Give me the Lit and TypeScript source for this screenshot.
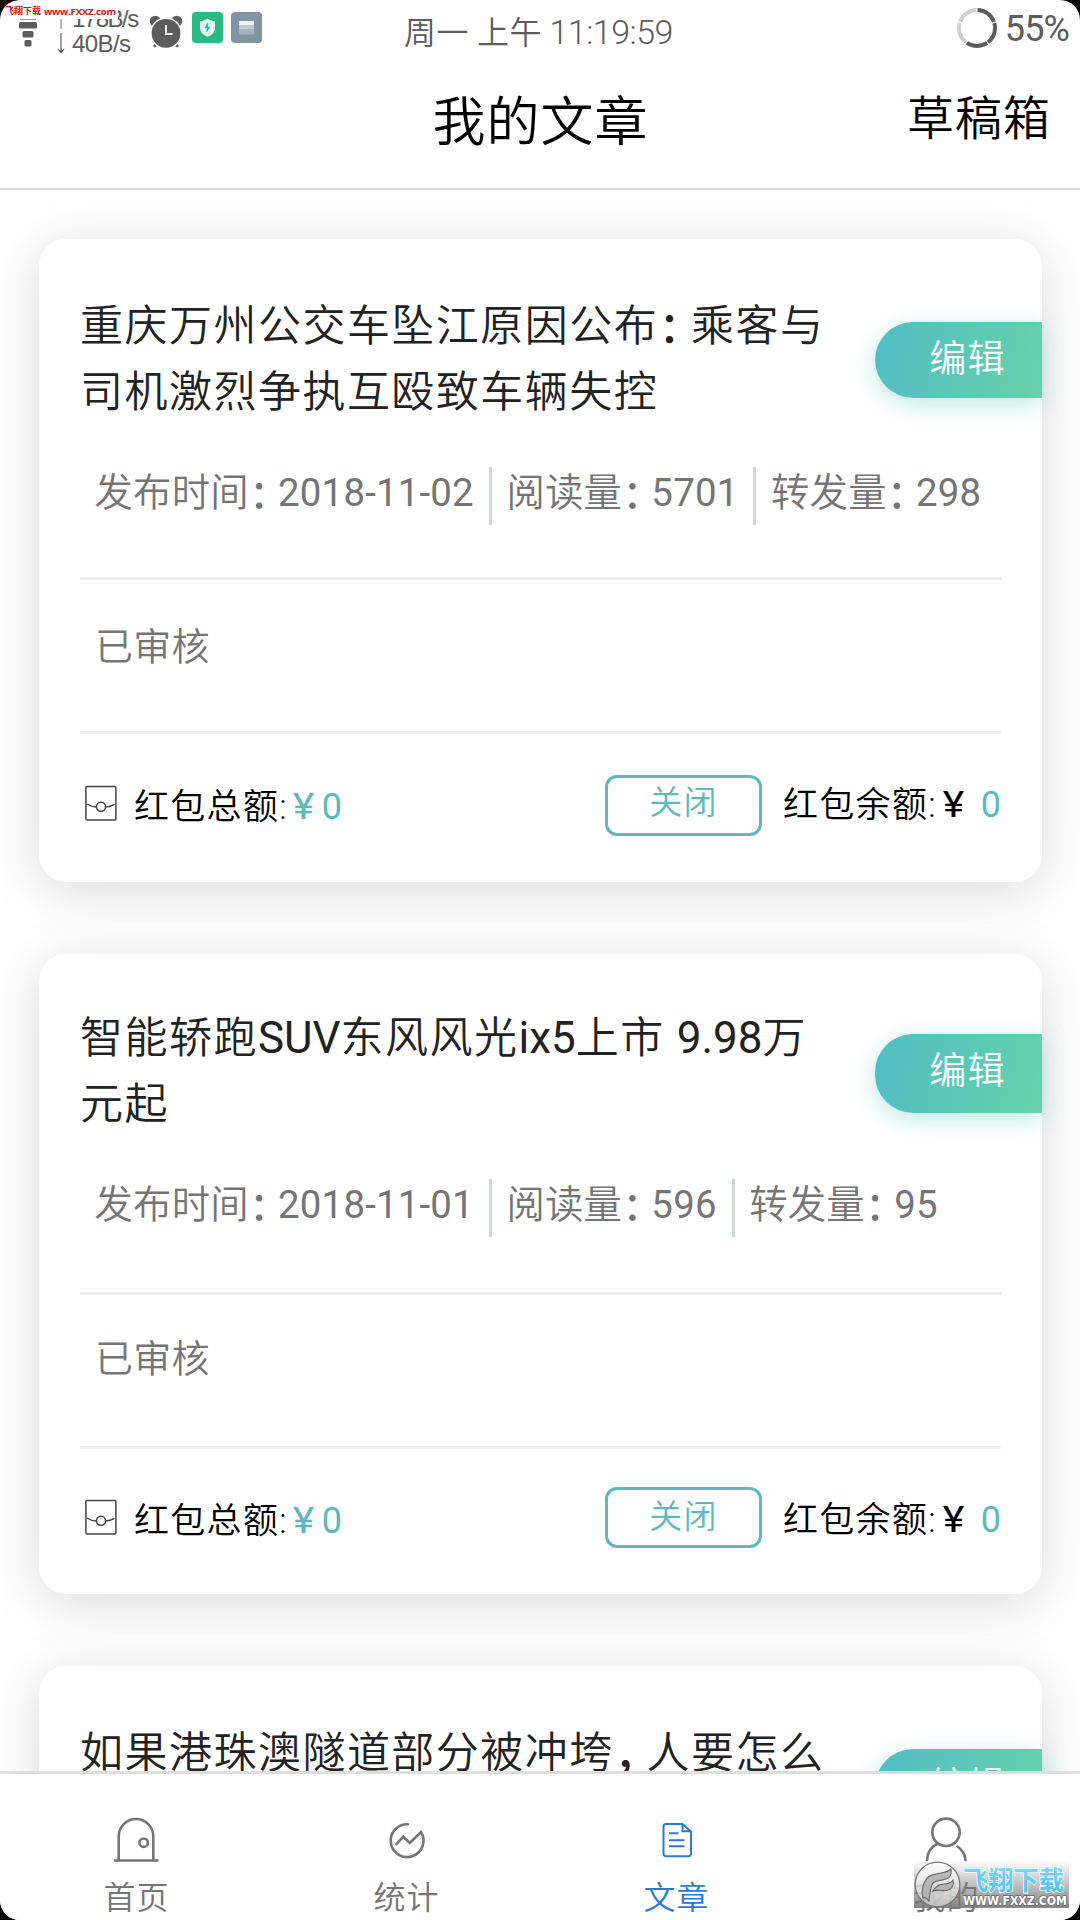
import { LitElement, html, css, svg, nothing } from "lit";
import { customElement, property } from "lit/decorators.js";
import { classMap } from "lit/directives/class-map.js";

interface Article {
  title: string[];
  date: string;
  reads: string;
  shares: string;
  tight: boolean;
}

const articles: Article[] = [
  { title: ["重庆万州公交车坠江原因公布：乘客与", "司机激烈争执互殴致车辆失控"], date: "2018-11-02", reads: "5701", shares: "298", tight: false },
  { title: ["智能轿跑SUV东风风光ix5上市 9.98万", "元起"], date: "2018-11-01", reads: "596", shares: "95", tight: true },
  { title: ["如果港珠澳隧道部分被冲垮，人要怎么"], date: "", reads: "", shares: "", tight: false },
];

// Full-width punctuation takes three quarters of a cell; Latin runs carry their own weight.
const runs = (text: string) =>
  text.split(/([：，]|[A-Za-z0-9.\-]+)/).map((part) =>
    part === ""
      ? nothing
      : /^[：，]$/.test(part)
        ? html`<span class="punct">${part}</span>`
        : /^[A-Za-z0-9.\-]+$/.test(part)
          ? html`<span class="latin">${part}</span>`
          : part
  );

const runStyles = css`
  .punct { letter-spacing: -0.24em; font-weight: 500; position: relative; top: 2px; left: 0.5px; }
  .latin { font-weight: 370; }
`;

@customElement("status-bar")
class StatusBar extends LitElement {
  static styles = css`
    :host { display: grid; grid-template-columns: 404px 1fr 112px; height: 60px; color: #5c5c5c; }
    .left { display: flex; align-items: flex-start; }
    .signal { width: 20px; height: 28px; margin: 19px 0 0 18px; }
    .arrows { width: 10px; height: 36px; margin: 19px 0 0 18px; }
    .speed { font: 24px/26px "Liberation Sans", Arial, sans-serif; margin: 5px 0 0 6px; width: 78px; letter-spacing: -0.6px; white-space: nowrap; }
    .up { letter-spacing: -1.5px; position: relative; top: 1px; }
    .alarm { width: 34px; height: 34px; margin: 14px 0 0 -1px; }
    .app { width: 31px; height: 31px; margin: 12px 0 0 8px; }
    .alarm + .app { margin-left: 9px; }
    .time { font-size: 34px; line-height: 40px; font-weight: 350; padding-top: 12px; white-space: pre; letter-spacing: -0.6px; }
    .digits { font-weight: 340; letter-spacing: -0.5px; }
    .han { font-size: 32px; letter-spacing: 0.4px; }
    .right { display: flex; align-items: flex-start; justify-self: end; margin-right: 11px; margin-left: -12px; }
    .ring { width: 42px; height: 42px; margin: 7px 0 0 -1px; flex: none; }
    .percent { font-size: 36px; line-height: 40px; margin: 9px 0 0 7px; letter-spacing: -0.9px; font-weight: 370; }
  `;

  render() {
    return html`
      <div class="left">
        <svg class="signal" viewBox="0 0 20 28" fill="#5c5c5c">
          <path d="M2 0h16v1H2z" opacity=".6" />
          <rect x="1" y="3" width="18" height="6.4" rx="1.5" />
          <rect x="4.5" y="12" width="11" height="6.4" rx="1.5" />
          <rect x="6.5" y="21" width="7" height="6.4" rx="1.5" />
        </svg>
        <svg class="arrows" viewBox="0 0 10 36" fill="none">
          <path d="M5 0v10" stroke="#aaa" stroke-width="1.6" />
          <path d="M5 14v18" stroke="#8b8b8b" stroke-width="1.6" />
          <path d="M1 29.5l4 2 4-2-4 5.3z" fill="#5c5c5c" />
        </svg>
        <div class="speed"><div class="up">178B/s</div><div>40B/s</div></div>
        <svg class="alarm" viewBox="0 0 34 34">
          <g fill="#5c5c5c">
            <circle cx="6.3" cy="7.3" r="5.6" />
            <circle cx="27.7" cy="7.3" r="5.6" />
            <path d="M4 32l4-5 3 3-5 3.500zM30 32l-4-5-3 3 5 3.500z" />
          </g>
          <circle cx="17" cy="19.300" r="15.200" fill="#5c5c5c" stroke="#fff" stroke-width="1.600" />
          <path d="M17 11v9h6.500" fill="none" stroke="#fff" stroke-width="1.800" />
        </svg>
        <svg class="app" viewBox="0 0 31 31">
          <rect width="31" height="31" rx="4" fill="#2cba84" />
          <path d="M15.500 6.500c2.500 1.800 4.500 2.500 7.500 2.700v6.800c0 4.300-3.200 7.200-7.500 8.800-4.300-1.600-7.500-4.500-7.500-8.800V9.200c3-.2 5-.9 7.500-2.700z" fill="#dcfff1" />
          <path d="M16.200 10l-4 6h2.600l-.4 5 4-6.300h-2.600z" fill="#2cba84" />
        </svg>
        <svg class="app" viewBox="0 0 31 31">
          <rect width="31" height="31" rx="4" fill="#8094a1" />
          <path d="M8 9h15v4.500H8z" fill="#f1f4f6" />
          <path d="M8 13.500h15v4H8z" fill="#c1cad0" />
          <path d="M8 17.500h15v5H8z" fill="#a7b4bd" />
        </svg>
      </div>
      <div class="time"><span class="han">周一 上午</span> <span class="digits">11:19:59</span></div>
      <div class="right">
        <svg class="ring" viewBox="0 0 42 42" fill="none" stroke-width="4">
          <g transform="rotate(-90 21 21)">
            <circle cx="21" cy="21" r="18" stroke="#cfcfcf" pathLength="100" stroke-dasharray="0 60.500 19 1 19 .5" />
            <circle cx="21" cy="21" r="18" stroke="#5c5c5c" pathLength="100" stroke-dasharray="0 .5 19 1 19 1 19 40.500" />
          </g>
        </svg>
        <span class="percent">55%</span>
      </div>
    `;
  }
}

@customElement("article-card")
class ArticleCard extends LitElement {
  @property({ attribute: false }) article!: Article;

  static styles = [
    runStyles,
    css`
      :host { display: block; }
      .card {
        display: flex; flex-direction: column; box-sizing: border-box;
        width: 1003px; height: 643px; border-radius: 27px; background: #fff;
        box-shadow: 0 9px 54px rgba(0, 0, 0, 0.15); padding-top: 53px;
      }
      .card.tight { height: 640px; padding-top: 50px; }
      .head { display: flex; justify-content: space-between; align-items: flex-start; height: 175px; flex: none; }
      .title { padding: 1px 0 0 41px; font-size: 43px; letter-spacing: 1.48px; line-height: 66px; color: #222; font-weight: 350; white-space: nowrap; }
      .title .latin { font-size: 44px; letter-spacing: 0; }
      .edit {
        box-sizing: border-box; width: 167px; height: 76px; margin-top: 30px; padding-left: 18px;
        border-radius: 38px 0 0 38px; background: linear-gradient(105deg, #51bdc4, #67d1aa);
        box-shadow: 0 6px 24px rgba(87, 197, 187, 0.4);
        color: #fff; font-size: 37px; letter-spacing: 1.2px; line-height: 75px; text-align: center; font-weight: 350;
      }
      .tight .edit { height: 79px; }
      .meta { display: flex; height: 58px; flex: none; padding-left: 55.500px; color: #757575; font-size: 38.4px; letter-spacing: 0.2px; line-height: 52px; font-weight: 350; white-space: nowrap; }
      .field + .field { border-left: 3px solid #cfd8d8; margin-left: 15px; padding-left: 14.500px; }
      .rule { height: 3px; margin: 0 41px; background: #eee; flex: none; }
      .meta + .rule { margin-top: 52px; }
      .tight .meta + .rule { margin-top: 55px; }
      .state { height: 151px; flex: none; box-sizing: border-box; padding: 42px 0 0 56px; font-size: 38px; letter-spacing: 0.3px; line-height: 50px; color: #757575; font-weight: 350; }
      .tight .state { padding-top: 39px; }
      .foot { display: flex; align-items: flex-start; padding: 41px 41px 0 46px; font-size: 35px; letter-spacing: 1.3px; font-weight: 350; color: #000; }
      .tight .foot { padding-top: 38px; }
      .packet { width: 32px; height: 36px; margin-top: 10px; flex: none; }
      .label { line-height: 52px; margin-top: 4px; white-space: nowrap; }
      .total { margin-left: 17px; margin-top: 6px; flex: 1; }
      .tight .label { margin-top: 7px; }
      .tight .total { margin-top: 8px; }
      .tight .packet { margin-top: 12px; }
      .teal { color: #5cb9bd; }
      .num, .yen { display: inline-block; font-weight: 370; letter-spacing: 0; font-size: 36px; }
      .yen { transform: scale(1.14, 1.04); font-weight: 400; }
      .total .yen { margin: 0 9px 0 6px; }
      .rest .yen { margin: 0 18px 0 7px; }
      .close {
        box-sizing: border-box; width: 157px; height: 61px; border: 3px solid #5cb9bd; border-radius: 12px;
        color: #5cb9bd; font-size: 33px; letter-spacing: 1.2px; line-height: 49px; text-align: center; margin-right: 21px;
      }
      .tight .close { line-height: 54px; }
    `,
  ];

  render() {
    const a = this.article;
    return html`
      <article class=${classMap({ card: true, tight: a.tight })}>
        <div class="head">
          <div class="title">${a.title.map((line) => html`<div>${runs(line)}</div>`)}</div>
          <div class="edit">编辑</div>
        </div>
        ${a.date
          ? html`
              <div class="meta">
                <div class="field">${runs("发布时间：" + a.date)}</div>
                <div class="field">${runs("阅读量：" + a.reads)}</div>
                <div class="field">${runs("转发量：" + a.shares)}</div>
              </div>
              <div class="rule"></div>
              <div class="state">已审核</div>
              <div class="rule"></div>
              <div class="foot">
                <svg class="packet" viewBox="0 0 32 36" fill="none" stroke="#444" stroke-width="1.5">
                  <rect x=".9" y="1.500" width="30" height="33.500" rx="1" />
                  <path d="M2 19c3 2 6 2.800 9.500 3M20.500 22c3.500-.2 6-1 9-2.700" />
                  <circle cx="16" cy="21.800" r="4.500" />
                </svg>
                <div class="label total">红包总额:<span class="yen teal">¥</span><span class="num teal">0</span></div>
                <div class="close">关闭</div>
                <div class="label rest">红包余额:<span class="yen">¥</span><span class="num teal">0</span></div>
              </div>
            `
          : nothing}
      </article>
    `;
  }
}

const tabs = [
  {
    name: "首页", active: false,
    icon: svg`<path d="M13.700 45V21.300a17.300 17.300 0 0 1 34.600 0V45" /><path d="M10 45.500h42.500" stroke-linecap="round" /><circle cx="38.700" cy="27.700" r="4.200" />`,
  },
  {
    name: "统计", active: false,
    icon: svg`<path d="M33 9.300A16.400 16.400 0 1 0 46 17L34.800 28 28.300 21.700 21.500 29" stroke-linecap="round" />`,
  },
  {
    name: "文章", active: true,
    icon: svg`<g stroke-width="2"><path d="M37.500 8.900H21a2.500 2.500 0 0 0-2.500 2.500v27.400a2.500 2.500 0 0 0 2.500 2.500h22.500a2.500 2.500 0 0 0 2.500-2.500V16.500z" stroke-linejoin="round" /><path d="M37.500 9v7.200H46M24 18.300h9.500M24 25.200h15.500M24 31.200h15.500" /></g>`,
  },
  {
    name: "我的", active: false,
    icon: svg`<circle cx="31" cy="17.300" r="13.700" /><path d="M12 45c.5-7.500 4-13.500 11-16.500M42.500 31.500c5 3.500 7.500 8 8 13.500" stroke-linecap="round" />`,
  },
];

@customElement("tab-bar")
class TabBar extends LitElement {
  static styles = css`
    :host { display: grid; grid-template-columns: repeat(4, 1fr); box-sizing: border-box; height: 149px; border-top: 3px solid #dedede; background: #fff; }
    .tab { display: flex; flex-direction: column; align-items: center; padding-top: 41px; color: #757575; font-size: 32px; font-weight: 350; }
    .tab.active { color: #2e78d6; }
    .icon { width: 60px; height: 50px; fill: none; stroke: currentColor; stroke-width: 2.6; }
    .name { line-height: 40px; margin-top: 13px; padding-left: 3px; letter-spacing: 1px; }
  `;

  render() {
    return tabs.map(
      (t) => html`
        <div class=${classMap({ tab: true, active: t.active })}>
          <svg class="icon" viewBox="0 0 60 50">${t.icon}</svg>
          <div class="name">${t.name}</div>
        </div>
      `
    );
  }
}

@customElement("app-root")
class AppRoot extends LitElement {
  static styles = css`
    :host {
      display: block; position: relative; width: 1080px; height: 1920px; overflow: hidden; background: #000;
      font-family: Roboto, "Noto Sans CJK SC", sans-serif;
    }
    .screen { display: flex; flex-direction: column; height: 1920px; background: #fff; border-radius: 20px; overflow: hidden; }
    .header { display: grid; grid-template-columns: 1fr auto 1fr; height: 127.500px; flex: none; border-bottom: 2px solid #dadada; color: #000; font-weight: 350; }
    .heading { grid-column: 2; font-size: 53px; letter-spacing: 1px; line-height: 70px; padding: 28px 0 0 1px; }
    .drafts { justify-self: end; font-size: 47px; letter-spacing: 1px; line-height: 60px; padding: 29px 29px 0 0; }
    .list { display: flex; flex-direction: column; flex: 1; min-height: 0; overflow: hidden; padding: 49.500px 0 0 39px; gap: 72px; }
    .site { position: absolute; left: 5px; top: 4px; width: 113px; height: 15px; background: #fff; border-radius: 6px 0 0 0; display: flex; gap: 3px; align-items: center; color: #d91212; font-weight: 700; white-space: nowrap; }
    .site-han { font-size: 9px; line-height: 15px; }
    .site-url { font: 700 9.600px/15px "Open Sans", sans-serif; letter-spacing: -0.2px; }
    .badge { position: absolute; left: 914px; top: 1860px; width: 155px; height: 48px; }
  `;

  render() {
    return html`
      <div class="screen">
        <status-bar></status-bar>
        <div class="header">
          <div class="heading">我的文章</div>
          <div class="drafts">草稿箱</div>
        </div>
        <div class="list">${articles.map((a) => html`<article-card .article=${a}></article-card>`)}</div>
        <tab-bar></tab-bar>
      </div>
      <div class="site"><span class="site-han">飞翔下载</span><span class="site-url">www.FXXZ.com</span></div>
      <svg class="badge" viewBox="0 0 155 48">
        <defs>
          <linearGradient id="shade" x1="0" y1="0" x2="0" y2="1">
            <stop offset="0" stop-color="#777" stop-opacity="0" />
            <stop offset="1" stop-color="#777" stop-opacity=".9" />
          </linearGradient>
          <linearGradient id="sky" x1="0" y1="0" x2="0" y2="1">
            <stop offset="0" stop-color="#8bdcf6" />
            <stop offset="1" stop-color="#45bdea" />
          </linearGradient>
          <linearGradient id="disc" x1="0" y1="0" x2="0" y2="1">
            <stop offset="0" stop-color="#fff" stop-opacity=".85" />
            <stop offset="1" stop-color="#ddd" stop-opacity=".65" />
          </linearGradient>
        </defs>
        <rect width="155" height="48" fill="url(#shade)" />
        <circle cx="23.500" cy="24.500" r="22.300" fill="url(#disc)" stroke="#777" stroke-width="1.200" />
        <path d="M9 38c-2-7 0-15 4-20 4-4 9-4 14-5 4-1 7-1 10-4 1 5-1 9-5 10-5 2-10 1-13 4-3 4-3 10-4 18-2-3-4-4-6-3z" fill="#b5b5b5" stroke="#666" stroke-width="1.100" />
        <path d="M19 31c3-5 7-7 11-7 4 0 7-1 9-4 1 5-1 9-5 10-5 2-10-1-15 1z" fill="#b5b5b5" stroke="#666" stroke-width="1.100" />
        <text x="49" y="30" textLength="101" lengthAdjust="spacingAndGlyphs" font-family="Noto Sans CJK SC, sans-serif" font-size="26" font-weight="700" fill="url(#sky)" stroke="#f2fcff" stroke-width="1.600" paint-order="stroke">飞翔下载</text>
        <text x="49" y="44.500" textLength="104" lengthAdjust="spacingAndGlyphs" font-family="DejaVu Sans, sans-serif" font-size="11.500" font-weight="700" fill="#fff" stroke="#666" stroke-width="1.400" paint-order="stroke">WWW.FXXZ.COM</text>
      </svg>
    `;
  }
}
